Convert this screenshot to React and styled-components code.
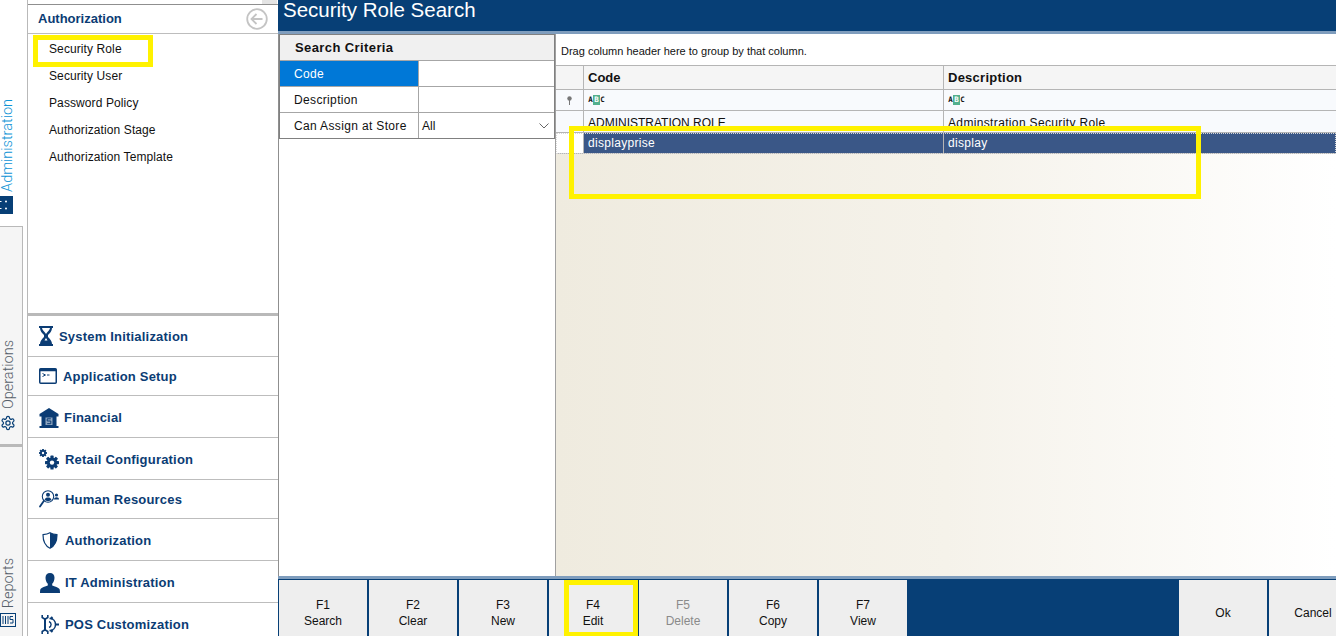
import styled, { createGlobalStyle } from "styled-components";

const navy = "#073f76";
const ink = "#0b3c74";

const GlobalStyle = createGlobalStyle`
  html, body {
    margin: 0;
    padding: 0;
    height: 100%;
    overflow: hidden;
    background: #ffffff;
  }
  * { box-sizing: border-box; }
  body {
    font-family: "Liberation Sans", Arial, sans-serif;
    font-size: 12px;
    color: #111;
  }
`;

const HourglassIcon = () => (
  <svg width="14" height="20" viewBox="0 0 14 20">
    <path fill={ink} d="M0 0h14v2h-1c0 3-2 5-4 7v2c2 2 4 4 4 7h1v2H0v-2h1c0-3 2-5 4-7V9C3 7 1 5 1 2H0z" />
    <path fill="#fff" d="M3 2h8c0 2-3 4-4 6-1-2-4-4-4-6z" />
    <path fill="#fff" d="M7 12l1.500 2.500h-3z" />
  </svg>
);

const TerminalIcon = () => (
  <svg width="18" height="16" viewBox="0 0 18 16">
    <rect x="0.75" y="0.75" width="16.5" height="14.5" rx="1" fill="#fff" stroke={ink} strokeWidth="1.5" />
    <rect x="0.75" y="0.75" width="16.5" height="2.5" fill={ink} />
    <path d="M3.5 5.5l3 1.5-3 1.5M8 7h2.5" fill="none" stroke={ink} strokeWidth="1" />
  </svg>
);

const BankIcon = () => (
  <svg width="20" height="20" viewBox="0 0 20 20">
    <path fill={ink} d="M10 0l9.500 6v2.500H.5V6z" />
    <rect x="2.500" y="8" width="15" height="10" fill={ink} />
    <rect x="0.500" y="18" width="19" height="2" fill={ink} />
    <rect x="6.500" y="9.500" width="7" height="7.500" fill="#8fa6c0" />
    <path d="M11.800 10.800H8.200v2.200h3.600v2.700H8.200" fill="none" stroke={ink} strokeWidth="1" />
  </svg>
);

const gearTeeth = [0, 45, 90, 135];

const GearsIcon = () => (
  <svg width="21" height="21" viewBox="0 0 21 21">
    <g fill={ink}>
      {gearTeeth.map((angle) => (
        <rect key={angle} x="11.4" y="6.600" width="3.200" height="14" rx="0.6" transform={`rotate(${angle} 13 13.600)`} />
      ))}
      <circle cx="13" cy="13.600" r="5.200" />
      {gearTeeth.map((angle) => (
        <rect key={angle} x="3.100" y="0" width="1.800" height="8" transform={`rotate(${angle} 4 4)`} />
      ))}
      <circle cx="4" cy="4" r="3" />
    </g>
    <circle cx="13" cy="13.600" r="2.200" fill="#fff" />
    <circle cx="4" cy="4" r="1.200" fill="#fff" />
  </svg>
);

const PeopleSearchIcon = () => (
  <svg width="21" height="18" viewBox="0 0 21 18">
    <circle cx="9" cy="6.500" r="5.700" fill="none" stroke={ink} strokeWidth="1.100" />
    <circle cx="9" cy="4.800" r="2" fill={ink} />
    <path fill={ink} d="M5.500 10c.5-2 2-2.500 3.500-2.500s3 .5 3.500 2.500c-2 1.500-5 1.500-7 0z" />
    <path d="M4.800 11L1 16.500" stroke={ink} strokeWidth="1.800" strokeLinecap="round" />
    <circle cx="17.500" cy="5" r="1.600" fill={ink} />
    <path fill={ink} d="M15 9.500c0-1.500 1-2.200 2.500-2.200s2.500.7 2.500 2.200z" />
  </svg>
);

const ShieldIcon = () => (
  <svg width="16" height="17" viewBox="0 0 16 17">
    <path fill="#fff" stroke={ink} strokeWidth="1.200" d="M8 .8c2 1.200 4 1.700 7 1.900 0 6-1.500 10.800-7 13.500C2.500 13.500 1 8.700 1 2.700 4 2.500 6 2 8 .8z" />
    <path fill={ink} d="M8 .8c2 1.200 4 1.700 7 1.900 0 6-1.500 10.800-7 13.500z" />
  </svg>
);

const UserIcon = () => (
  <svg width="20" height="20" viewBox="0 0 20 20">
    <path fill={ink} d="M10 0c2.800 0 4.500 2 4.500 4.800 0 2.600-1 4.700-2.300 6v1.700c2.500 1 6.300 1.800 7.300 3.500.4 1 .5 2.500.5 4H0c0-1.500.1-3 .5-4 1-1.700 4.800-2.500 7.300-3.500v-1.700c-1.300-1.300-2.300-3.400-2.300-6C5.500 2 7.200 0 10 0z" />
  </svg>
);

const PosToolsIcon = () => (
  <svg width="18" height="21" viewBox="0 0 18 21">
    <g fill="none" stroke={ink}>
      <path strokeWidth="2" d="M4 4v13" />
      <path strokeWidth="1.600" d="M1.200 1v2.500L4 5.200l2.800-1.700V1M1.200 20v-2.500L4 15.800l2.800 1.700V20" />
      <path strokeWidth="1.400" d="M8 7.500a3.200 3.200 0 0 1 0 6" />
      <path strokeWidth="2.200" d="M10 3l1.500 2M14.500 10.500H18M10 18l1.500-2" />
      <path strokeWidth="1.500" d="M8.500 4.500c3.700 0 6 2.500 6 6s-2.300 6-6 6" />
    </g>
  </svg>
);

const AdminIcon = () => (
  <svg width="13" height="18" viewBox="0 0 13 18">
    <rect width="13" height="18" fill={navy} />
    <circle cx="6" cy="5.500" r="1" fill="#fff" />
    <circle cx="6" cy="12.500" r="1" fill="#fff" />
    <rect x="0" y="5" width="1.500" height="1" fill="#fff" />
    <rect x="0" y="12" width="1.500" height="1" fill="#fff" />
  </svg>
);

const OperationsIcon = () => (
  <svg width="16" height="16" viewBox="0 0 24 24" fill="none" stroke={navy} strokeWidth="1.800" strokeLinejoin="round">
    <path d="M12.200 2h-.4a2 2 0 0 0-2 2v.2a2 2 0 0 1-1 1.700l-.4.300a2 2 0 0 1-2 0l-.2-.1a2 2 0 0 0-2.700.7l-.2.400a2 2 0 0 0 .7 2.700l.2.100a2 2 0 0 1 1 1.700v.5a2 2 0 0 1-1 1.700l-.2.100a2 2 0 0 0-.7 2.700l.2.400a2 2 0 0 0 2.700.7l.2-.1a2 2 0 0 1 2 0l.4.300a2 2 0 0 1 1 1.700v.2a2 2 0 0 0 2 2h.4a2 2 0 0 0 2-2v-.2a2 2 0 0 1 1-1.700l.4-.3a2 2 0 0 1 2 0l.2.100a2 2 0 0 0 2.700-.7l.2-.4a2 2 0 0 0-.7-2.700l-.2-.1a2 2 0 0 1-1-1.700v-.5a2 2 0 0 1 1-1.700l.2-.1a2 2 0 0 0 .7-2.700l-.2-.4a2 2 0 0 0-2.700-.7l-.2.100a2 2 0 0 1-2 0l-.4-.3a2 2 0 0 1-1-1.700V4a2 2 0 0 0-2-2z" />
    <circle cx="12" cy="12" r="3.200" />
  </svg>
);

const ReportsIcon = () => (
  <svg width="16" height="16" viewBox="0 0 16 16" fill="none" stroke={navy}>
    <rect x="0.500" y="1.500" width="15" height="13" />
    <path d="M3 4v8M5.500 4v8M8 4v8" />
    <path d="M13 4.500h-3v3h3v3.500h-3" />
  </svg>
);

const BackIcon = () => (
  <svg width="22" height="22" viewBox="0 0 22 22" fill="none">
    <circle cx="11" cy="11" r="9.800" stroke="#c4c4c4" strokeWidth="1.800" />
    <path d="M16.500 11H6M10.500 6l-5 5 5 5" stroke="#c4c4c4" strokeWidth="1.800" />
  </svg>
);

const Page = styled.div`
  position: relative;
  width: 1336px;
  height: 636px;
  display: flex;
  overflow: hidden;
  background: #fff;
`;

const Rail = styled.nav`
  width: 28px;
  height: 100%;
  flex-shrink: 0;
  display: flex;
  flex-direction: column;
  border-right: 1px solid #b9b9b9;
`;

const RailTab = styled.div`
  height: ${(props) => props.$height};
  flex-grow: ${(props) => (props.$grow ? 1 : 0)};
  width: ${(props) => (props.$active ? "27px" : "23px")};
  display: flex;
  flex-direction: column;
  justify-content: flex-end;
  align-items: flex-start;
  gap: ${(props) => props.$gap};
  padding-bottom: ${(props) => props.$bottom};
  background: ${(props) => (props.$active ? "#fff" : "#f5f5f5")};
  border-right: ${(props) => (props.$active ? "none" : "1px solid #b9b9b9")};
  border-top: ${(props) => (props.$active ? "none" : "1px solid #b9b9b9")};
  border-bottom: ${(props) => (props.$divider ? "2px solid #b9b9b9" : "none")};
`;

const RailLabel = styled.span`
  writing-mode: vertical-rl;
  transform: rotate(180deg);
  font-family: Roboto, "Liberation Sans", sans-serif;
  font-size: 14.500px;
  font-weight: 300;
  line-height: 15px;
  margin-left: ${(props) => (props.$active ? "0" : "1px")};
  color: ${(props) => (props.$active ? "#0f94d6" : "#56606a")};
`;

const Sidebar = styled.aside`
  width: 251px;
  height: 100%;
  flex-shrink: 0;
  display: flex;
  flex-direction: column;
  overflow: hidden;
  border-right: 1px solid #8f8f8f;
`;

const SearchStub = styled.div`
  height: 5px;
  flex-shrink: 0;
  display: flex;
  justify-content: flex-end;
  border-bottom: 1px solid #8f8f8f;
`;

const StubButton = styled.div`
  width: 15px;
  margin-right: 1px;
  background: #e4e4e4;
`;

const SectionHead = styled.div`
  height: 29px;
  flex-shrink: 0;
  display: flex;
  align-items: center;
  justify-content: space-between;
  padding: 0 10px 1px;
  border-bottom: 1px solid #bdbdbd;
`;

const SectionTitle = styled.h2`
  margin: 0;
  font-size: 13px;
  font-weight: 700;
  color: ${ink};
`;

const MenuList = styled.ul`
  list-style: none;
  margin: 0;
  padding: 2px 0 0 21px;
  height: 282px;
  flex-shrink: 0;
  border-bottom: 3px solid #b9b9b9;
`;

const MenuItem = styled.li`
  height: 27px;
  line-height: 26px;
  font-size: 12px;
  letter-spacing: 0.1px;
  color: #111;
`;

const Group = styled.div`
  height: ${(props) => props.$height}px;
  flex-shrink: 0;
  display: flex;
  align-items: center;
  gap: ${(props) => props.$gap}px;
  padding-left: 11px;
  padding-top: ${(props) => (props.$height === 42 ? "2px" : "0")};
  border-bottom: 1px solid #bdbdbd;
  font-size: 13px;
  font-weight: 700;
  letter-spacing: 0.2px;
  color: ${ink};
`;

const GroupIcon = styled.span`
  width: ${(props) => props.$width}px;
  display: flex;
  justify-content: center;
  flex-shrink: 0;
`;

const Main = styled.main`
  flex: 1;
  min-width: 0;
  height: 100%;
  display: flex;
  flex-direction: column;
`;

const TitleBar = styled.header`
  height: 34px;
  margin-left: -1px;
  padding: 0 0 0 5px;
  background: ${navy};
  border-bottom: 3px solid #7f9dbd;
  color: #fff;
  font-size: 20.500px;
  line-height: 19px;
`;

const Body = styled.div`
  flex: 1;
  min-height: 0;
  display: flex;
`;

const CriteriaPanel = styled.section`
  width: 277px;
  flex-shrink: 0;
  background: #fff;
  border-right: 1px solid #a0a0a0;
`;

const CriteriaTable = styled.div`
  width: 276px;
  border: 1px solid #808080;
`;

const CriteriaHead = styled.div`
  height: 26px;
  line-height: 25px;
  padding-left: 15px;
  background: #f0f0f0;
  font-weight: 700;
  font-size: 13px;
  letter-spacing: 0.4px;
  color: #111;
  border-bottom: 1px solid #a6a6a6;
`;

const CriteriaRow = styled.div`
  height: ${(props) => (props.$last ? "25px" : "26px")};
  display: grid;
  grid-template-columns: 139px 1fr;
  border-bottom: ${(props) => (props.$last ? "none" : "1px solid #a6a6a6")};
`;

const CriteriaLabel = styled.div`
  display: flex;
  align-items: center;
  padding: 1px 0 0 14px;
  letter-spacing: 0.35px;
  color: ${(props) => (props.$selected ? "#fff" : "#111")};
  background: ${(props) => (props.$selected ? "#0078d7" : "#fff")};
  border-right: 1px solid #a6a6a6;
`;

const CriteriaValue = styled.div`
  display: flex;
  align-items: center;
  justify-content: space-between;
  padding: 0 5px 0 3px;
  color: #111;
`;

const Grid = styled.section`
  flex: 1;
  min-width: 0;
  display: flex;
  flex-direction: column;
  background: linear-gradient(90deg, #efebdf 0%, #f5f2ea 50%, #ffffff 100%);
`;

const GroupHint = styled.div`
  height: 32px;
  line-height: 34px;
  padding-left: 5px;
  font-size: 11px;
  background: #fff;
  border-bottom: 1px solid #b5b5b5;
`;

const GridRow = styled.div`
  height: ${(props) => props.$height}px;
  display: grid;
  grid-template-columns: 27px 360px 1fr;
  flex-shrink: 0;
  background: ${(props) => props.$background};
  color: ${(props) => props.$color || "#111"};
  border-bottom: 1px solid #b5b5b5;
`;

const GridCell = styled.div`
  display: flex;
  align-items: center;
  gap: 2px;
  padding: ${(props) => props.$drop || "0"} 0 0 4px;
  overflow: hidden;
  border-left: ${(props) => (props.$lead ? "none" : "1px solid #b5b5b5")};
  font-weight: ${(props) => (props.$bold ? 700 : 400)};
  font-size: ${(props) => (props.$bold ? "13px" : "12px")};
  letter-spacing: ${(props) => props.$tracking || "0"};
`;

const PinCell = styled(GridCell)`
  justify-content: center;
  padding-left: 0;
`;

const BlankCell = styled(GridCell)`
  background: #fff;
`;

const SelectedRow = styled(GridRow)`
  outline: 1px dotted #d8d8d8;
  outline-offset: -1px;
`;

const FilterGlyph = styled.span`
  display: inline-flex;
  align-items: center;
  font-family: "DejaVu Sans Mono", monospace;
  font-size: 7.500px;
  font-weight: 700;
  line-height: 10px;
  color: #111;
`;

const FilterLetter = styled.span`
  width: ${(props) => (props.$marked ? "7px" : "5px")};
  height: 10px;
  text-align: center;
  background: ${(props) => (props.$marked ? "#53b08d" : "transparent")};
  color: ${(props) => (props.$marked ? "#fff" : "#111")};
`;

const CommandBar = styled.footer`
  height: 60px;
  margin-left: -1px;
  flex-shrink: 0;
  display: flex;
  gap: 2px;
  background: ${navy};
  border-top: 3px solid #7f9dbd;
  padding: 1px 0 0 1px;
`;

const Command = styled.button`
  width: 88px;
  height: 100%;
  flex-shrink: 0;
  padding: 10px 0 0;
  border: none;
  background: #eeeeee;
  font-family: inherit;
  font-size: 12px;
  line-height: 16px;
  color: ${(props) => (props.disabled ? "#8a8a8a" : "#111")};
`;

const Spacer = styled.div`
  width: 268px;
  flex-shrink: 0;
`;

const Highlight = styled.div`
  position: absolute;
  left: ${(props) => props.$left}px;
  top: ${(props) => props.$top}px;
  width: ${(props) => props.$width}px;
  height: ${(props) => props.$height}px;
  border: 5px solid #fff200;
  pointer-events: none;
`;

const menuItems = [
  "Security Role",
  "Security User",
  "Password Policy",
  "Authorization Stage",
  "Authorization Template",
];

const groups = [
  { label: "System Initialization", icon: <HourglassIcon />, width: 14, gap: 6, height: 41 },
  { label: "Application Setup", icon: <TerminalIcon />, width: 18, gap: 6, height: 39 },
  { label: "Financial", icon: <BankIcon />, width: 20, gap: 5, height: 42 },
  { label: "Retail Configuration", icon: <GearsIcon />, width: 21, gap: 5, height: 42 },
  { label: "Human Resources", icon: <PeopleSearchIcon />, width: 21, gap: 5, height: 39 },
  { label: "Authorization", icon: <ShieldIcon />, width: 21, gap: 5, height: 42 },
  { label: "IT Administration", icon: <UserIcon />, width: 21, gap: 5, height: 42 },
  { label: "POS Customization", icon: <PosToolsIcon />, width: 21, gap: 5, height: 42 },
];

const commands = [
  ["F1", "Search"],
  ["F2", "Clear"],
  ["F3", "New"],
  ["F4", "Edit"],
  ["F5", "Delete", true],
  ["F6", "Copy"],
  ["F7", "View"],
];

const FilterIcon = () => (
  <FilterGlyph>
    <FilterLetter>A</FilterLetter>
    <FilterLetter $marked>B</FilterLetter>
    <FilterLetter>C</FilterLetter>
  </FilterGlyph>
);

export default function App() {
  return (
    <Page>
      <GlobalStyle />
      <Rail>
        <RailTab $active $height="226px" $gap="4px" $bottom="12px">
          <RailLabel $active>Administration</RailLabel>
          <AdminIcon />
        </RailTab>
        <RailTab $height="220px" $gap="6px" $bottom="13px" $divider>
          <RailLabel>Operations</RailLabel>
          <OperationsIcon />
        </RailTab>
        <RailTab $grow $gap="4px" $bottom="8px">
          <RailLabel>Reports</RailLabel>
          <ReportsIcon />
        </RailTab>
      </Rail>

      <Sidebar>
        <SearchStub>
          <StubButton />
        </SearchStub>
        <SectionHead>
          <SectionTitle>Authorization</SectionTitle>
          <BackIcon />
        </SectionHead>
        <MenuList>
          {menuItems.map((item) => (
            <MenuItem key={item}>{item}</MenuItem>
          ))}
        </MenuList>
        {groups.map((group) => (
          <Group key={group.label} $height={group.height} $gap={group.gap}>
            <GroupIcon $width={group.width}>{group.icon}</GroupIcon>
            {group.label}
          </Group>
        ))}
      </Sidebar>

      <Main>
        <TitleBar>Security Role Search</TitleBar>
        <Body>
          <CriteriaPanel>
            <CriteriaTable>
              <CriteriaHead>Search Criteria</CriteriaHead>
              <CriteriaRow>
                <CriteriaLabel $selected>Code</CriteriaLabel>
                <CriteriaValue />
              </CriteriaRow>
              <CriteriaRow>
                <CriteriaLabel>Description</CriteriaLabel>
                <CriteriaValue />
              </CriteriaRow>
              <CriteriaRow $last>
                <CriteriaLabel>Can Assign at Store</CriteriaLabel>
                <CriteriaValue>
                  All
                  <svg width="10" height="6" viewBox="0 0 10 6" fill="none">
                    <path d="M0.500 0.500L5 5L9.500 0.500" stroke="#666" />
                  </svg>
                </CriteriaValue>
              </CriteriaRow>
            </CriteriaTable>
          </CriteriaPanel>
          <Grid>
            <GroupHint>Drag column header here to group by that column.</GroupHint>
            <GridRow $height={24} $background="#f5f5f5">
              <GridCell $lead />
              <GridCell $bold>Code</GridCell>
              <GridCell $bold $tracking="0.25px">Description</GridCell>
            </GridRow>
            <GridRow $height={21} $background="#f8fafd">
              <PinCell $lead>
                <svg width="7" height="9" viewBox="0 0 7 9">
                  <circle cx="3.500" cy="2.500" r="2.200" fill="#777" />
                  <rect x="3" y="4" width="1" height="5" fill="#777" />
                </svg>
              </PinCell>
              <GridCell><FilterIcon /></GridCell>
              <GridCell><FilterIcon /></GridCell>
            </GridRow>
            <GridRow $height={22} $background="#f8fafd">
              <GridCell $lead />
              <GridCell $drop="3px">ADMINISTRATION ROLE</GridCell>
              <GridCell $drop="3px" $tracking="0.35px">Adminstration Security Role</GridCell>
            </GridRow>
            <SelectedRow $height={21} $background="#3a5787" $color="#fff">
              <BlankCell $lead />
              <GridCell $tracking="0.3px">displayprise</GridCell>
              <GridCell $tracking="0.3px">display</GridCell>
            </SelectedRow>
          </Grid>
        </Body>
        <CommandBar>
          {commands.map(([key, label, disabled]) => (
            <Command key={key} disabled={disabled}>
              {key}
              <br />
              {label}
            </Command>
          ))}
          <Spacer />
          <Command>Ok</Command>
          <Command>Cancel</Command>
        </CommandBar>
      </Main>

      <Highlight $left={33} $top={35} $width={120} $height={32} />
      <Highlight $left={569} $top={126} $width={632} $height={73} />
      <Highlight $left={564} $top={580} $width={74} $height={57} />
    </Page>
  );
}
